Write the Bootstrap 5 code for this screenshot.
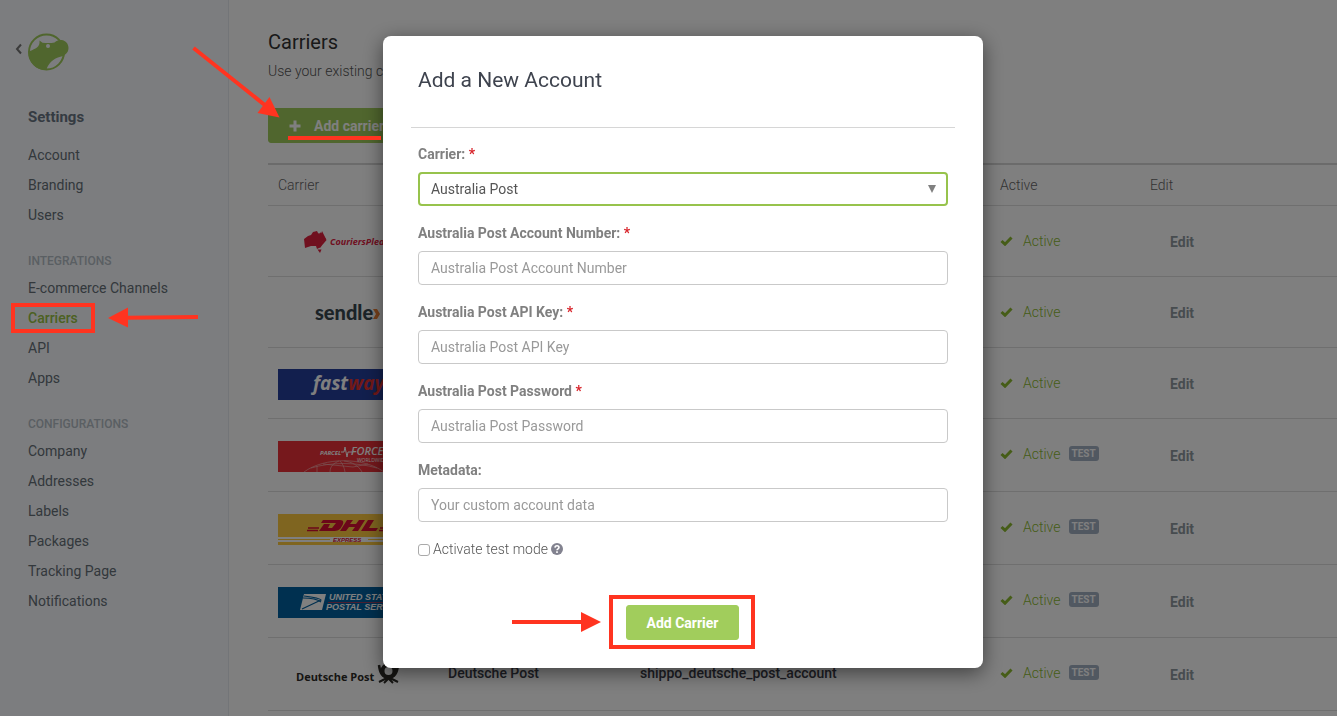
<!DOCTYPE html>
<html lang="en">
<head>
<meta charset="utf-8">
<meta name="viewport" content="width=device-width, initial-scale=1">
<title>Carriers</title>
<link href="https://cdn.jsdelivr.net/npm/bootstrap@5.3.0/dist/css/bootstrap.min.css" rel="stylesheet">
<style>
  body { font-family: Roboto, "Liberation Sans", sans-serif; font-size: 14px; line-height: 20px; color: #666; }
  a { text-decoration: none; }

  /* Sidebar */
  .side { width: 229px; background: #f9fbfe; border-right: 1px solid #e6eaf0; }
  .side-logo { height: 38px; margin: 33px 0 0 14px; }
  .side-title { font-size: 15px; font-weight: 700; color: #6b7684; margin: 36px 0 13px 28px; line-height: 20px; }
  .side-group { font-size: 12px; font-weight: 500; color: #b4bec6; margin: 21px 0 2px 28px; line-height: 20px; }
  .side .nav-link { padding: 5px 0 5px 28px; color: #667079; line-height: 20px; }
  .side .nav-link.active { color: #98c244; font-weight: 500; }

  /* Carrier list */
  .content { padding: 30px 0 0 39px; min-width: 0; }
  .content h1 { font-size: 20px; line-height: 24px; font-weight: 400; color: #333; margin: 0 0 7px; }
  .lead-in { font-weight: 300; color: #555; margin: 0 0 27px; }
  .btn-leaf { --bs-btn-color: #fff; --bs-btn-bg: #a1cd5c; --bs-btn-border-color: #a1cd5c; --bs-btn-hover-bg: #93c04c; --bs-btn-hover-color: #fff;
    --bs-btn-border-radius: 3px; font-size: 14px; line-height: 20px; font-weight: 700; height: 35px; padding: 6px 20px; gap: 13px; }
  .carriers { table-layout: fixed; margin: 20px 0 0; border-top: 2px solid #d6d6d6; --bs-table-color: #666; }
  .carriers > :not(caption) > * > * { padding: 0 10px; border-bottom: 1px solid #dedede; }
  .carriers th { font-weight: 300; color: #666; height: 41px; vertical-align: middle; }
  .carriers > tbody > tr > td { height: 71px; }
  .carriers > tbody > .is-test > td { height: 73px; padding-bottom: 2px; }
  .carriers > tbody > tr > td:first-child { padding-top: 3px; padding-bottom: 0; }
  .carriers > tbody > tr > td:last-child { padding-top: 2px; padding-bottom: 0; }
  .carriers .name { color: #3c3e4a; font-weight: 500; }
  .live { color: #8cba30; gap: 10px; font-weight: 300; }
  .edit { color: #8f999f; font-weight: 700; padding-left: 20px; }
  .tag { background: #a3b1c3; font-size: 10px; line-height: 15px; padding: 0 3px; border-radius: 3px; font-weight: 700; margin-left: -2px; }
  .brandmark { display: block; width: 150px; height: 31px; }
  .brandmark text { font-family: "Open Sans", sans-serif; }
  .brandmark .rounded-type { font-family: Lato, sans-serif; }
  .brandmark .grotesk { font-family: "Liberation Sans", sans-serif; }

  /* Dialog */
  .modal { padding-left: 29px; }
  .modal-dialog { max-width: 600px; margin: 36px auto; }
  .modal-content { border: 0; border-radius: 8px; box-shadow: 0 5px 20px rgba(0, 0, 0, .5); color: #7f7f7f; }
  .modal-header { margin: 0 28px; padding: 31px 7px 33px; border-bottom: 1px solid #d6d6d6; }
  .modal-title { font-size: 21px; line-height: 27px; font-weight: 400; color: #3e434e; }
  .modal-body { padding: 16px 35px 0; }
  .modal-body .field { margin-bottom: 17px; }
  .modal-body .form-label { display: block; font-weight: 700; color: #808080; margin-bottom: 8px; }
  .req { color: #d8232a; }
  .modal-body .form-control, .modal-body .form-select { height: 34px; font-size: 14px; line-height: 20px; padding: 6px 12px; border: 1px solid #c9c9c9; border-radius: 4px; }
  .modal-body .form-control::placeholder { color: #999; }
  .modal-body .form-select { border: 2px solid #97c34c; padding: 5px 36px 5px 11px; color: #555;
    background-image: url("data:image/svg+xml,%3csvg xmlns='http://www.w3.org/2000/svg' viewBox='0 0 8 8'%3e%3cpath d='M0 0h8L4 8z' fill='%23808080'/%3e%3c/svg%3e");
    background-size: 8px 8px; background-position: right 10px center; }
  .test-mode { gap: 3px; font-weight: 300; color: #555; }
  .test-mode .form-check-input { width: 12px; height: 12px; margin: 2px 0 0; border-color: #aaa; border-radius: 3px; }
  .modal-footer { border: 0; padding: 36px 2px 19px 0; margin: 0; }
  .modal-footer > * { margin: 0; }
  .callout-box { position: relative; border: 4px solid #ff3420; padding: 6px 12px 5px 13px; }
  .callout-arrow { position: absolute; right: 100%; top: 50%; margin: -10px 12px 0 0; }

  /* Tour marks over the page */
  .tour { position: fixed; left: 0; top: 0; z-index: 1060; pointer-events: none; }
</style>
</head>
<body class="modal-open overflow-hidden">

<div class="d-flex min-vh-100">
  <aside class="side flex-shrink-0">
    <a href="#" class="side-logo d-flex align-items-center" aria-label="Back">
      <svg width="56" height="40" viewBox="0 0 56 40">
        <path d="M7 12.500 3 17l4 4.500" fill="none" stroke="#777" stroke-width="2"/>
        <circle cx="32.500" cy="20" r="17.500" fill="none" stroke="#a1cd5c" stroke-width="2"/>
        <path d="M14.500 20C19 17.500 25 16 25.500 11V8.500l3 2.200c5 .3 9 .3 12-.3 2-2 4.500-2.400 7-2.400 4.500.5 7 4 7 8 0 5-4 8-9 9-6 1.500-12 7-13 13-10 .5-18-7-18-18z" fill="#a1cd5c"/>
        <circle cx="34" cy="14" r="2" fill="#f9fbfe"/>
      </svg>
    </a>
    <h2 class="side-title">Settings</h2>
    <nav class="nav flex-column">
      <a class="nav-link" href="#">Account</a>
      <a class="nav-link" href="#">Branding</a>
      <a class="nav-link" href="#">Users</a>
    </nav>
    <h3 class="side-group">INTEGRATIONS</h3>
    <nav class="nav flex-column">
      <a class="nav-link" href="#">E-commerce Channels</a>
      <a class="nav-link active" href="#" aria-current="page">Carriers</a>
      <a class="nav-link" href="#">API</a>
      <a class="nav-link" href="#">Apps</a>
    </nav>
    <h3 class="side-group">CONFIGURATIONS</h3>
    <nav class="nav flex-column">
      <a class="nav-link" href="#">Company</a>
      <a class="nav-link" href="#">Addresses</a>
      <a class="nav-link" href="#">Labels</a>
      <a class="nav-link" href="#">Packages</a>
      <a class="nav-link" href="#">Tracking Page</a>
      <a class="nav-link" href="#">Notifications</a>
    </nav>
  </aside>

  <main class="content flex-grow-1">
    <h1>Carriers</h1>
    <p class="lead-in">Use your existing carriers</p>
    <button type="button" class="btn btn-leaf d-inline-flex align-items-center">
      <svg width="12" height="12" viewBox="0 0 12 12"><path d="M6 0.500v11M.5 6h11" stroke="#fff" stroke-width="3"/></svg>Add carrier
    </button>
    <table class="table carriers align-middle">
      <colgroup><col style="width:170px"><col style="width:192px"><col style="width:360px"><col style="width:150px"><col></colgroup>
      <thead>
        <tr><th>Carrier</th><th></th><th></th><th>Active</th><th>Edit</th></tr>
      </thead>
      <tbody>
        <tr>
          <td>
            <svg class="brandmark" viewBox="0 0 150 31">
              <path d="M26 12l4-3 3-1 2-3 4-1 1 2 3 2 1-4 2 4 2 4-4 3-1 5-4 2-1-3-5 0-6 2z" fill="#e0213f"/>
              <path d="M42 6l5 7-6 7" fill="none" stroke="#e0213f" stroke-width="2.500"/>
              <path d="M39.500 22.500h4L42 26z" fill="#e0213f"/>
              <text x="52" y="18" font-size="9" font-weight="700" font-style="italic" fill="#e0213f">CouriersPlease</text>
            </svg>
          </td>
          <td></td><td></td>
          <td><span class="live d-flex align-items-center"><svg width="13" height="10" viewBox="0 0 13 10"><path d="M1.500 5 5 8.200 11.500 1.500" fill="none" stroke="currentColor" stroke-width="3"/></svg>Active</span></td>
          <td><a class="edit" href="#">Edit</a></td>
        </tr>
        <tr>
          <td>
            <svg class="brandmark" viewBox="0 0 150 31">
              <text class="rounded-type" x="37" y="22" font-size="20" font-weight="900" fill="#38474f">sendle</text>
              <path d="M95 11h4l3 5-3 5h-4l3-5z" fill="#ee8138"/>
            </svg>
          </td>
          <td></td><td></td>
          <td><span class="live d-flex align-items-center"><svg width="13" height="10" viewBox="0 0 13 10"><path d="M1.500 5 5 8.200 11.500 1.500" fill="none" stroke="currentColor" stroke-width="3"/></svg>Active</span></td>
          <td><a class="edit" href="#">Edit</a></td>
        </tr>
        <tr>
          <td>
            <svg class="brandmark" viewBox="0 0 150 31">
              <path d="M0 0h150v31H0z" fill="#243f9c"/>
              <text x="35" y="21" font-size="19" font-weight="700" font-style="italic" fill="#fff">fast<tspan fill="#e6322f">way</tspan></text>
            </svg>
          </td>
          <td></td><td></td>
          <td><span class="live d-flex align-items-center"><svg width="13" height="10" viewBox="0 0 13 10"><path d="M1.500 5 5 8.200 11.500 1.500" fill="none" stroke="currentColor" stroke-width="3"/></svg>Active</span></td>
          <td><a class="edit" href="#">Edit</a></td>
        </tr>
        <tr class="is-test">
          <td>
            <svg class="brandmark" viewBox="0 0 150 31">
              <path d="M0 0h150v31H0z" fill="#ec3038"/>
              <g fill="none" stroke="#f3a9a9" stroke-width=".7"><path d="M26 31c20-15 60-15 80 0M39 31V25M52 31c0-6 4-9 9-11M67 31c-1-5-2-8-5-11M84 31c-4-7-10-10-18-11M33 27c20-6 45-6 66 0M45 23l30 3 15-3"/></g>
              <text x="42" y="14" font-size="6" font-weight="700" font-style="italic" fill="#fff">PARCEL</text>
              <path d="M63 11h3l1-5 2 10 1-5h4" fill="none" stroke="#fff"/>
              <text x="73" y="14" font-size="11" font-weight="600" font-style="italic" fill="#fff">FORCE</text>
              <text x="79" y="21" font-size="5" fill="#fff">WORLDWIDE</text>
            </svg>
          </td>
          <td></td><td></td>
          <td><span class="live d-flex align-items-center"><svg width="13" height="10" viewBox="0 0 13 10"><path d="M1.500 5 5 8.200 11.500 1.500" fill="none" stroke="currentColor" stroke-width="3"/></svg>Active<span class="badge tag">TEST</span></span></td>
          <td><a class="edit" href="#">Edit</a></td>
        </tr>
        <tr class="is-test">
          <td>
            <svg class="brandmark" viewBox="0 0 150 31">
              <path d="M0 0h150v23H0zM0 28h150v3H0z" fill="#fecb40"/>
              <path d="M0 25.500h52M90 25.500h60" stroke="#fecb40"/>
              <path d="M30 14h11M29 16.500h11M102 14h12M101 16.500h12" stroke="#d80f32" stroke-width="1.500"/>
              <path fill="#d80f32" fill-rule="evenodd" d="M45 6h17c4 0 4 3 2 6-2 4-4 5-9 5H41l5-7h6l-2 4h4l4-5H43zM69 6h6l-3 4h6l3-4h6l-7 11h-6l3-4h-6l-3 4h-6zM90 6h6l-5 8h9l-2 3H83z"/>
              <text class="grotesk" x="55" y="28" font-size="6" font-weight="700" font-style="italic" fill="#d80f32">EXPRESS</text>
            </svg>
          </td>
          <td></td><td></td>
          <td><span class="live d-flex align-items-center"><svg width="13" height="10" viewBox="0 0 13 10"><path d="M1.500 5 5 8.200 11.500 1.500" fill="none" stroke="currentColor" stroke-width="3"/></svg>Active<span class="badge tag">TEST</span></span></td>
          <td><a class="edit" href="#">Edit</a></td>
        </tr>
        <tr class="is-test">
          <td>
            <svg class="brandmark" viewBox="0 0 150 31">
              <path d="M0 0h150v31H0z" fill="#0060a0"/>
              <path d="M26 7h22l-4 16H22z" fill="#fff"/>
              <path d="M26 9c8 1 16 2 17 4l-19 9M25 11c6 0 13 0 18 4" fill="none" stroke="#0060a0" stroke-width="1.200"/>
              <text class="grotesk" x="51" y="13" font-size="9" font-weight="700" font-style="italic" fill="#fff">UNITED STATES</text>
              <path d="M50 15.500h90" stroke="#d8304a" stroke-width=".7"/>
              <text class="grotesk" x="48" y="23" font-size="9" font-weight="700" font-style="italic" fill="#fff">POSTAL SERVICE</text>
            </svg>
          </td>
          <td></td><td></td>
          <td><span class="live d-flex align-items-center"><svg width="13" height="10" viewBox="0 0 13 10"><path d="M1.500 5 5 8.200 11.500 1.500" fill="none" stroke="currentColor" stroke-width="3"/></svg>Active<span class="badge tag">TEST</span></span></td>
          <td><a class="edit" href="#">Edit</a></td>
        </tr>
        <tr class="is-test">
          <td>
            <svg class="brandmark" viewBox="0 0 150 31">
              <text x="18" y="21" font-size="11" font-weight="700" fill="#2c2a26">Deutsche Post</text>
              <circle cx="110.500" cy="11" r="6" fill="none" stroke="#2c2a26" stroke-width="4"/>
              <path d="M101 5c1 9 4 12 8 12M120 5c-1 9-4 12-8 12" fill="none" stroke="#2c2a26" stroke-width="2.500"/>
              <path d="M101 22l8-4M106 23l5-5M120 22l-8-4M115 23l-5-5" stroke="#2c2a26" stroke-width="2"/>
            </svg>
          </td>
          <td class="name">Deutsche Post</td><td class="name">shippo_deutsche_post_account</td>
          <td><span class="live d-flex align-items-center"><svg width="13" height="10" viewBox="0 0 13 10"><path d="M1.500 5 5 8.200 11.500 1.500" fill="none" stroke="currentColor" stroke-width="3"/></svg>Active<span class="badge tag">TEST</span></span></td>
          <td><a class="edit" href="#">Edit</a></td>
        </tr>
      </tbody>
    </table>
  </main>
</div>

<div class="modal-backdrop show"></div>
<div class="modal d-block overflow-hidden" tabindex="-1" role="dialog" aria-labelledby="dialogTitle" aria-modal="true">
  <div class="modal-dialog">
    <form class="modal-content">
      <div class="modal-header">
        <h2 class="modal-title" id="dialogTitle">Add a New Account</h2>
      </div>
      <div class="modal-body">
        <div class="field">
          <label class="form-label" for="carrier">Carrier: <span class="req">*</span></label>
          <select class="form-select" id="carrier"><option>Australia Post</option></select>
        </div>
        <div class="field">
          <label class="form-label" for="number">Australia Post Account Number: <span class="req">*</span></label>
          <input class="form-control" id="number" type="text" placeholder="Australia Post Account Number">
        </div>
        <div class="field">
          <label class="form-label" for="key">Australia Post API Key: <span class="req">*</span></label>
          <input class="form-control" id="key" type="text" placeholder="Australia Post API Key">
        </div>
        <div class="field">
          <label class="form-label" for="password">Australia Post Password <span class="req">*</span></label>
          <input class="form-control" id="password" type="password" placeholder="Australia Post Password">
        </div>
        <div class="field">
          <label class="form-label" for="meta">Metadata:</label>
          <input class="form-control" id="meta" type="text" placeholder="Your custom account data">
        </div>
        <div class="test-mode d-flex align-items-center">
          <input class="form-check-input" type="checkbox" id="test">
          <label for="test">Activate test mode</label>
          <svg width="12" height="12" viewBox="0 0 12 12"><circle cx="6" cy="6" r="6" fill="#82828f"/><path d="M4 4.600c.1-2.600 4-2.400 4-.2C8 5.900 6 5.700 6 7.300M6 8.300v1.600" fill="none" stroke="#fff" stroke-width="1.600"/></svg>
        </div>
      </div>
      <div class="modal-footer justify-content-center">
        <div class="callout-box">
          <svg class="callout-arrow" width="89" height="20" viewBox="0 0 89 20"><path d="M0 8h69V0l20 10-20 10v-8H0z" fill="#ff3420"/></svg>
          <button type="button" class="btn btn-leaf">Add Carrier</button>
        </div>
      </div>
    </form>
  </div>
</div>

<svg class="tour" width="400" height="340" viewBox="0 0 400 340" aria-hidden="true">
  <g fill="none" stroke="#ff3420" stroke-width="4">
    <path d="M193.500 48 266 106"/>
    <path d="M288 138h93"/>
    <path d="M13 305h80v26H13z"/>
    <path d="M198 317l-72 .8"/>
  </g>
  <path d="M279.500 117.500 257.500 113l12-16zM108 318l20-10.500v20z" fill="#ff3420"/>
</svg>

<script src="https://cdn.jsdelivr.net/npm/bootstrap@5.3.0/dist/js/bootstrap.bundle.min.js"></script>
</body>
</html>
